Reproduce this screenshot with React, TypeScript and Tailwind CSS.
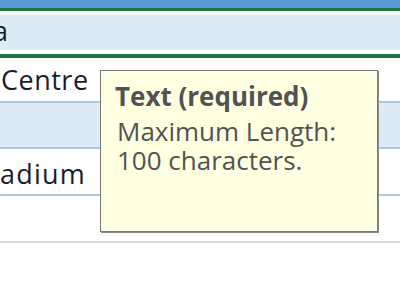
export default function App() {
  return (
    <div className="relative h-[282px] w-[400px] overflow-hidden bg-white font-['Open_Sans','Noto_Sans',sans-serif] text-[#1b1b2f]">
      {/* Ribbon edge */}
      <div className="h-[8px] bg-[#5b9bd5]" />
      <div className="h-[3px] bg-[#217346]" />
      <div className="h-[4px] bg-[#f4f8fc]" />

      {/* Header row */}
      <div className="flex h-[35px] items-start overflow-hidden bg-[#ddebf7] text-[27px] leading-[32px]">
        <span className="-ml-[7px]">a</span>
      </div>
      <div className="h-[4px] bg-white" />
      <div className="h-[4px] bg-[#217346]" />

      {/* Data rows */}
      <div className="flex h-[45px] items-center border-b-2 border-[#a9c8e8] bg-white pt-[1px] text-[27px] tracking-[0.5px]">
        <span className="ml-[1px]">Centre</span>
      </div>
      <div className="h-[46px] border-b-2 border-[#a9c8e8] bg-[#ddebf7]" />
      <div className="flex h-[47px] items-center border-b-2 border-[#a9c8e8] bg-white pt-[6px] text-[27px] tracking-[1.2px]">
        <span>adium</span>
      </div>
      <div className="h-[45px] bg-white" />
      <div className="h-[2px] bg-[#dadada]" />

      {/* Tooltip */}
      <div className="absolute left-[100px] top-[70px] h-[162px] w-[278px] border border-[#7a7a7a] bg-[#ffffe1] pl-[14px] pt-[11px] text-[#525252] shadow-[1px_1px_0_#8a8a8a]">
        <div className="text-[26px] font-bold leading-[29px]">Text (required)</div>
        <div className="mt-[6px] pl-[2px] text-[26px] leading-[29px]">
          Maximum Length:
          <br />
          100 characters.
        </div>
      </div>
    </div>
  );
}
